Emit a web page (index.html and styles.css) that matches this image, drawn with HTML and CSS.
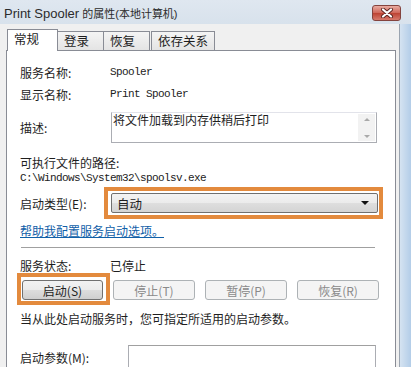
FILE: index.html
```html
<!DOCTYPE html>
<html lang="zh-CN">
<head>
    <meta charset="UTF-8">
    <title>Print Spooler 的属性(本地计算机)</title>
    <link rel="stylesheet" href="styles.css">
</head>
<body>
    <div class="window">
        <div class="titlebar">
            <span class="title"><span class="title-en">Print Spooler</span> 的属性(本地计算机)</span>
            <button class="close" aria-label="关闭">
                <svg width="14" height="10" viewBox="0 0 14 10">
                    <path d="M3 1.5 L11 8.5 M11 1.5 L3 8.5" stroke="#5b2420" stroke-width="4" stroke-linecap="round"/>
                    <path d="M3 1.5 L11 8.5 M11 1.5 L3 8.5" stroke="#fff" stroke-width="2.2" stroke-linecap="round"/>
                </svg>
            </button>
        </div>
        <div class="main">
            <div class="client">
                <div class="tabs">
                    <div class="tab active">常规</div>
                    <div class="tab">登录</div>
                    <div class="tab">恢复</div>
                    <div class="tab wide">依存关系</div>
                </div>
                <div class="panel">
                    <div class="field">
                        <span class="label">服务名称:</span>
                        <span class="mono">Spooler</span>
                    </div>
                    <div class="field gap-s">
                        <span class="label">显示名称:</span>
                        <span class="mono">Print Spooler</span>
                    </div>
                    <div class="field desc-row">
                        <span class="label">描述:</span>
                        <div class="desc-box">
                            <span class="desc-text">将文件加载到内存供稍后打印</span>
                            <div class="scrollbar">
                                <span class="arrow up"></span>
                                <span class="arrow down"></span>
                            </div>
                        </div>
                    </div>
                    <div class="exe-label">可执行文件的路径:</div>
                    <div class="mono path">C:\Windows\System32\spoolsv.exe</div>
                    <div class="field startup-row">
                        <span class="label short">启动类型(E):</span>
                        <div class="highlight select-hl">
                            <div class="select">
                                <span>自动</span>
                                <span class="caret"></span>
                            </div>
                        </div>
                    </div>
                    <a class="help-link" href="#">帮助我配置服务启动选项。</a>
                    <div class="separator"></div>
                    <div class="field status-row">
                        <span class="label">服务状态:</span>
                        <span>已停止</span>
                    </div>
                    <div class="buttons">
                        <div class="highlight btn-hl">
                            <button class="btn">启动(S)</button>
                        </div>
                        <button class="btn disabled first-off">停止(T)</button>
                        <button class="btn disabled">暂停(P)</button>
                        <button class="btn disabled">恢复(R)</button>
                    </div>
                    <div class="hint">当从此处启动服务时，您可指定所适用的启动参数。</div>
                    <div class="field param-row">
                        <span class="label param">启动参数(M):</span>
                        <div class="param-input"></div>
                    </div>
                </div>
            </div>
            <div class="frame"></div>
        </div>
    </div>
</body>
</html>
```

FILE: styles.css
```css
* {
    box-sizing: border-box;
}
body {
    margin: 0;
    font-family: "Noto Sans CJK SC", sans-serif;
    font-size: 12px;
    color: #1e1e1e;
}
.window {
    width: 411px;
    height: 367px;
    overflow: hidden;
    display: flex;
    flex-direction: column;
    background: #eef1f5;
}
.titlebar {
    height: 24px;
    flex: none;
    display: flex;
    justify-content: space-between;
    align-items: flex-start;
    padding: 6px 10px 0 4px;
    background: linear-gradient(#dfe7f0, #d8e2ec);
}
.title {
    font-family: "Liberation Sans", "Noto Sans CJK SC", sans-serif;
    font-size: 11px;
    line-height: 16px;
    color: #2b2b2b;
}
.title-en {
    font-size: 13px;
}
.close {
    width: 29px;
    height: 16px;
    margin-top: -1px;
    padding: 0;
    border: 1px solid #84433e;
    border-radius: 3px;
    background: linear-gradient(#e9aca2, #d0685b 48%, #bd4333 52%, #d77a6c);
    display: flex;
    align-items: center;
    justify-content: center;
}
.main {
    flex: 1;
    display: flex;
}
.client {
    width: 400px;
    padding: 5px 0 0 6px;
    background: #f0f0f0;
    border-right: 1px solid #9aa4b0;
}
.frame {
    flex: 1;
    background: linear-gradient(90deg, #d5e3f1, #b3cde8);
}
.tabs {
    display: flex;
    align-items: flex-end;
    height: 21px;
    padding-left: 1px;
}
.tab {
    height: 19px;
    min-width: 47px;
    padding: 0 6px;
    line-height: 18px;
    font-size: 12.5px;
    border: 1px solid #898c95;
    border-bottom: none;
    background: linear-gradient(#f4f4f4, #e4e4e4);
    margin-right: -1px;
}
.tab.wide {
    margin-left: 2px;
}
.tab.active {
    height: 22px;
    min-width: 51px;
    margin-bottom: -1px;
    background: #fff;
    position: relative;
    z-index: 1;
}
.panel {
    width: 390px;
    height: 330px;
    background: #fff;
    border: 1px solid #898c95;
    padding: 11px 0 0 13px;
}
.field {
    display: flex;
    align-items: center;
    height: 20px;
}
.gap-s {
    margin-top: 2px;
}
.label {
    width: 90px;
    flex: none;
}
.label.short {
    width: 84px;
}
.label.param {
    width: 108px;
}
.mono {
    font-family: "Liberation Mono", monospace;
    font-size: 11px;
    letter-spacing: -0.6px;
    color: #222;
}
.desc-row {
    height: 31px;
    margin-top: 8px;
}
.desc-box {
    width: 266px;
    height: 31px;
    margin-left: 1px;
    border: 1px solid #abadb3;
    border-top-color: #e2e3ea;
    display: flex;
    justify-content: space-between;
}
.desc-text {
    line-height: 14px;
    padding-left: 1px;
}
.scrollbar {
    width: 17px;
    margin: 1px;
    background: #f2f2f2;
    display: flex;
    flex-direction: column;
    justify-content: space-between;
    align-items: center;
    padding: 4px 0 3px;
}
.arrow {
    width: 0;
    height: 0;
    border-left: 3px solid transparent;
    border-right: 3px solid transparent;
}
.arrow.up {
    border-bottom: 3px solid #a9a9a9;
}
.arrow.down {
    border-top: 3px solid #a9a9a9;
}
.exe-label {
    margin-top: 12px;
    line-height: 16px;
}
.path {
    line-height: 14px;
    height: 14px;
}
.startup-row {
    height: 32px;
    margin-top: 2px;
}
.highlight {
    border: 4px solid #e38a3d;
}
.select-hl {
    padding: 2px 1px 2px 3px;
}
.select {
    width: 267px;
    height: 20px;
    border: 1px solid #707070;
    border-radius: 2px;
    background: linear-gradient(#f3f3f3, #ebebeb 50%, #dedede 52%, #d4d4d4);
    display: flex;
    align-items: center;
    justify-content: space-between;
    padding: 0 8px 0 5px;
    font-size: 12.5px;
}
.caret {
    width: 0;
    height: 0;
    border-left: 4px solid transparent;
    border-right: 4px solid transparent;
    border-top: 4px solid #111;
}
.help-link {
    display: block;
    width: max-content;
    margin-top: 5px;
    line-height: 14px;
    color: #1060a8;
    text-decoration: underline;
}
.separator {
    width: 354px;
    margin: 9px 0 0 1px;
    border-top: 1px solid #a0a0a0;
}
.status-row {
    height: 16px;
    margin-top: 9px;
}
.buttons {
    display: flex;
    align-items: flex-start;
    margin-left: -3px;
}
.btn-hl {
    padding: 3px 3px 1px 1px;
}
.btn {
    width: 81px;
    height: 20px;
    padding: 0;
    font-family: "Noto Sans CJK SC", sans-serif;
    font-size: 12px;
    color: #1e1e1e;
    border: 1px solid #707070;
    border-radius: 3px;
    background: linear-gradient(#f2f2f2, #ebebeb 50%, #dddddd 52%, #cfcfcf);
}
.btn.disabled {
    margin-top: 7px;
    margin-left: 10px;
    width: 82px;
    color: #8a8a8a;
    border-color: #adb2b5;
    background: #f4f4f4;
}
.btn.first-off {
    margin-left: 3px;
}
.hint {
    margin-top: 6px;
    line-height: 16px;
}
.param-row {
    margin-top: 19px;
    height: 22px;
}
.param-input {
    width: 248px;
    height: 24px;
    border: 1px solid #abadb3;
    border-top-color: #a0a0a0;
}
```
